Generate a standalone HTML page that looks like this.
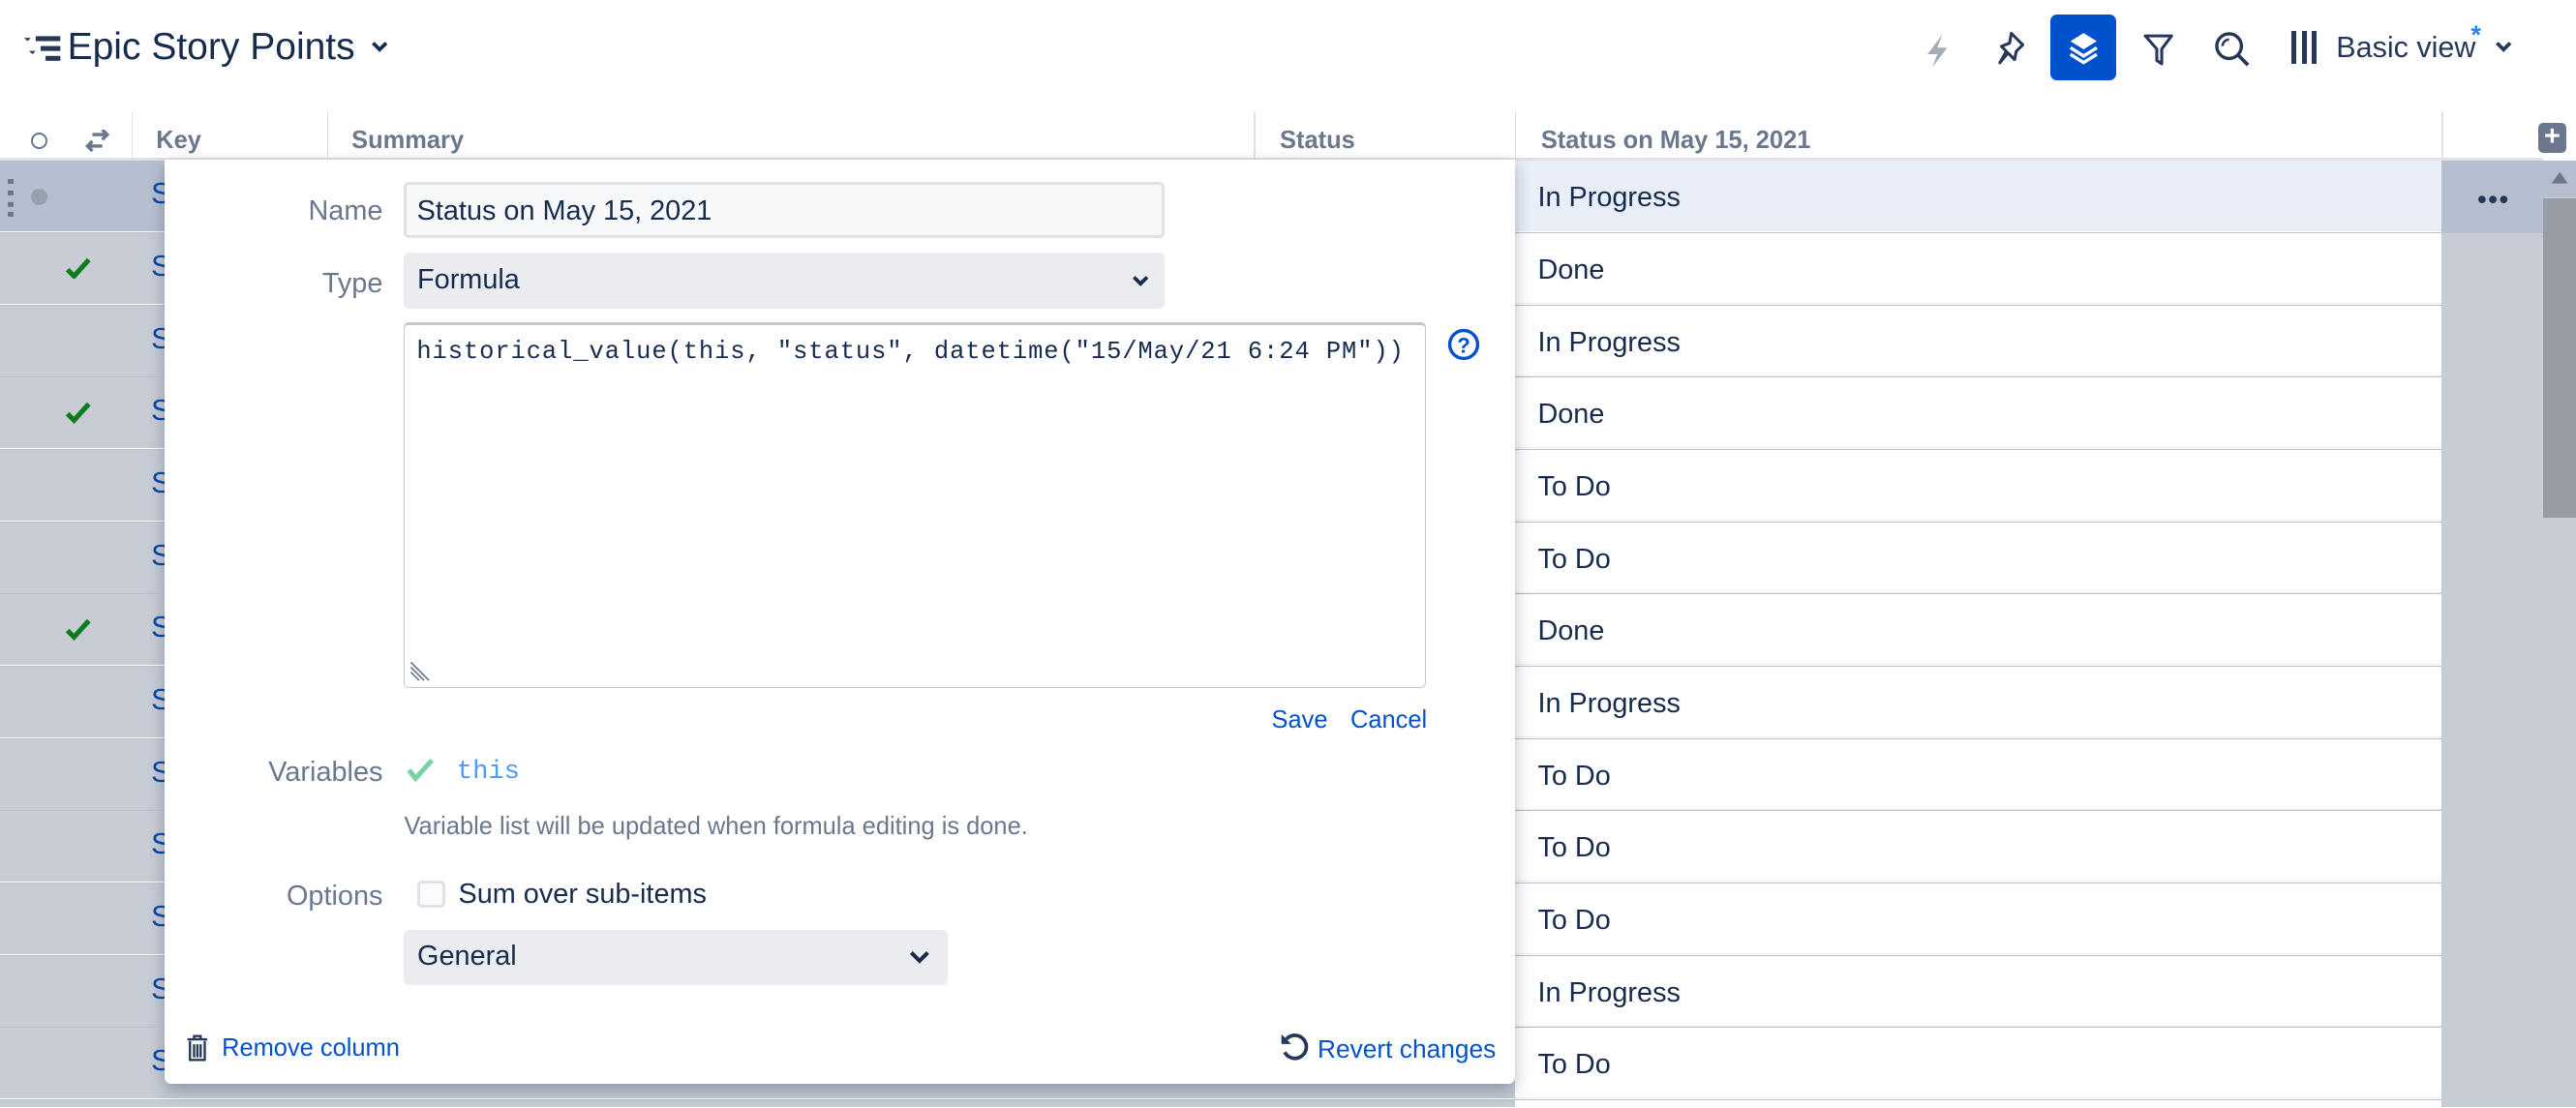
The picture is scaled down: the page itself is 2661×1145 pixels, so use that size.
<!DOCTYPE html>
<html><head><meta charset="utf-8"><style>
*{box-sizing:border-box;margin:0;padding:0}
html,body{width:2661px;height:1145px;overflow:hidden;background:#fff}
#w{zoom:1.69707;width:1568px;height:674px;position:relative;font-family:"Liberation Sans",sans-serif;color:#172b4d;overflow:hidden}
.a{position:absolute}
.hd{font-weight:bold;color:#6b778c;font-size:15px;top:77px}
.sep{position:absolute;top:68px;width:1px;height:29px;background:#dfe1e6}
.row{position:absolute;left:0;width:1548px;height:44px;border-bottom:1px solid #bcc1ca}
.lft{position:absolute;left:0;top:0;width:922px;height:43px;background:#c7ccd5}
.mid{position:absolute;left:922px;top:0;width:564px;height:43px;background:#fff;border-bottom:1px solid #ebecf0;font-size:17px;padding:13px 0 0 14px}
.rgt{position:absolute;left:1486px;top:0;width:62px;height:44px;background:#c7ccd5}
.s{position:absolute;left:92px;top:10px;color:#0747a6;font-size:18px}
.ck{position:absolute;left:40px;top:14px}
.lbl{position:absolute;right:689px;font-size:17px;color:#6b778c;text-align:right;white-space:nowrap}
.pl{position:absolute;font-size:17px}
a{color:#0052cc;text-decoration:none}
</style></head><body><div id="w">
<!-- header -->
<svg class="a" style="left:15px;top:20px" width="22" height="20" viewBox="0 0 22 20"><path d="M0 3l4 0-2 2z M3 11l4 0-2 2z" fill="#253858"/><rect x="7" y="2" width="15" height="3" fill="#253858"/><rect x="10" y="8" width="12" height="3" fill="#253858"/><rect x="13" y="14" width="9" height="3" fill="#253858"/></svg>
<div class="a" style="left:41px;top:16px;font-size:23px;color:#172b4d">Epic Story Points</div>
<svg class="a" style="left:225px;top:24px" width="12" height="10"><path d="M2 2l4 4 4-4" stroke="#172b4d" stroke-width="2.2" fill="none"/></svg>
<svg class="a" style="left:1170px;top:20px" width="18" height="22" viewBox="0 0 18 22"><path d="M12 1L3 13h6l-3 8 9-12H9z" fill="#a5adba"/></svg>
<svg class="a" style="left:1213px;top:18px" width="22" height="24" viewBox="0 0 22 24"><path d="M11 2l7 7-4 4-1 5-4-4-5 6 4-7-3-3 5-2z" stroke="#253858" stroke-width="1.8" fill="none" stroke-linejoin="round"/></svg>
<div class="a" style="left:1248px;top:9px;width:40px;height:40px;background:#0052cc;border-radius:4px"></div>
<svg class="a" style="left:1256px;top:17px" width="24" height="24" viewBox="0 0 24 24"><path d="M12 3l8 5-8 5-8-5z" fill="#fff"/><path d="M4 12l8 5 8-5M4 16l8 5 8-5" stroke="#fff" stroke-width="2" fill="none"/></svg>
<svg class="a" style="left:1303px;top:19px" width="22" height="22" viewBox="0 0 22 22"><path d="M3 3h16l-6 8v9l-3-2v-7z" stroke="#253858" stroke-width="1.8" fill="none" stroke-linejoin="round"/></svg>
<svg class="a" style="left:1346px;top:17px" width="26" height="26" viewBox="0 0 26 26"><circle cx="11" cy="11" r="7.5" stroke="#253858" stroke-width="2" fill="none"/><path d="M16.5 16.5l6 6" stroke="#253858" stroke-width="2.2"/><path d="M7 11a4 4 0 0 1 4-4" stroke="#253858" stroke-width="1.5" fill="none"/></svg>
<div class="a" style="left:1395px;top:19px;width:3px;height:20px;background:#253858"></div>
<div class="a" style="left:1401px;top:19px;width:3px;height:20px;background:#253858"></div>
<div class="a" style="left:1407px;top:19px;width:3px;height:20px;background:#253858"></div>
<div class="a" style="left:1422px;top:19px;font-size:18px;color:#253858">Basic view</div>
<div class="a" style="left:1504px;top:12px;font-size:16px;color:#2684ff;font-weight:bold">*</div>
<svg class="a" style="left:1518px;top:24px" width="12" height="10"><path d="M2 2l4 4 4-4" stroke="#253858" stroke-width="2.2" fill="none"/></svg>
<!-- table header -->
<div class="a" style="left:19px;top:81px;width:10px;height:10px;border:1.5px solid #6b778c;border-radius:50%"></div>
<svg class="a" style="left:51px;top:79px" width="16" height="14" viewBox="0 0 16 14"><path d="M5 3h9M11 0l3 3-3 3M11 10H2M5 7l-3 3 3 3" stroke="#6b778c" stroke-width="2" fill="none"/></svg>
<div class="sep" style="left:80px"></div><div class="sep" style="left:199px"></div><div class="sep" style="left:763px"></div><div class="sep" style="left:922px"></div><div class="sep" style="left:1486px"></div>
<div class="a hd" style="left:95px">Key</div>
<div class="a hd" style="left:214px">Summary</div>
<div class="a hd" style="left:779px">Status</div>
<div class="a hd" style="left:938px">Status on May 15, 2021</div>
<div class="a" style="left:1545px;top:75px;width:17px;height:18px;background:#6b778c;border-radius:3px;color:#fff;font-weight:bold;font-size:17px;line-height:17px;text-align:center">+</div>
<div class="a" style="left:0;top:96px;width:1548px;height:2px;background:#dfe1e6"></div>
<!-- rows -->
<div class="row" style="top:98px"><div class="lft" style="background:#b5bfcf"></div><div class="mid" style="background:#e9eef8">In Progress</div><div class="rgt" style="background:#b5bfcf"></div>
<div class="a" style="left:5px;top:11px;width:3px;height:3px;background:#6b778c;box-shadow:0 7px #6b778c,0 14px #6b778c,0 20px #6b778c"></div>
<div class="a" style="left:19px;top:17px;width:10px;height:10px;border-radius:50%;background:#97a0af"></div><div class="s">S</div>
<div class="a" style="left:1508px;top:14px;font-weight:bold;color:#253858;font-size:16px;letter-spacing:1px">•••</div></div>
<div class="row" style="top:142px"><div class="lft"></div><div class="mid">Done</div><div class="rgt"></div><svg class="ck" width="16" height="14"><path d="M1 8l4 4 9-10" stroke="#0a7d1a" stroke-width="3" fill="none"/></svg><div class="s">S</div></div>
<div class="row" style="top:186px"><div class="lft"></div><div class="mid">In Progress</div><div class="rgt"></div><div class="s">S</div></div>
<div class="row" style="top:230px"><div class="lft"></div><div class="mid">Done</div><div class="rgt"></div><svg class="ck" width="16" height="14"><path d="M1 8l4 4 9-10" stroke="#0a7d1a" stroke-width="3" fill="none"/></svg><div class="s">S</div></div>
<div class="row" style="top:274px"><div class="lft"></div><div class="mid">To Do</div><div class="rgt"></div><div class="s">S</div></div>
<div class="row" style="top:318px"><div class="lft"></div><div class="mid">To Do</div><div class="rgt"></div><div class="s">S</div></div>
<div class="row" style="top:362px"><div class="lft"></div><div class="mid">Done</div><div class="rgt"></div><svg class="ck" width="16" height="14"><path d="M1 8l4 4 9-10" stroke="#0a7d1a" stroke-width="3" fill="none"/></svg><div class="s">S</div></div>
<div class="row" style="top:406px"><div class="lft"></div><div class="mid">In Progress</div><div class="rgt"></div><div class="s">S</div></div>
<div class="row" style="top:450px"><div class="lft"></div><div class="mid">To Do</div><div class="rgt"></div><div class="s">S</div></div>
<div class="row" style="top:494px"><div class="lft"></div><div class="mid">To Do</div><div class="rgt"></div><div class="s">S</div></div>
<div class="row" style="top:538px"><div class="lft"></div><div class="mid">To Do</div><div class="rgt"></div><div class="s">S</div></div>
<div class="row" style="top:582px"><div class="lft"></div><div class="mid">In Progress</div><div class="rgt"></div><div class="s">S</div></div>
<div class="row" style="top:626px"><div class="lft"></div><div class="mid">To Do</div><div class="rgt"></div><div class="s">S</div></div>
<div class="a" style="left:0;top:670px;width:922px;height:4px;background:#c7ccd5"></div>
<div class="a" style="left:1486px;top:670px;width:62px;height:4px;background:#c7ccd5"></div>
<!-- scrollbar -->
<div class="a" style="left:1548px;top:98px;width:20px;height:576px;background:#c7ccd5"></div>
<div class="a" style="left:1548px;top:98px;width:20px;height:22px;background:#b5bfcf"></div>
<svg class="a" style="left:1552px;top:104px" width="12" height="9"><path d="M6 1l5 7H1z" fill="#6b778c"/></svg>
<div class="a" style="left:1548px;top:121px;width:20px;height:194px;background:#989ca5"></div>
<!-- popup -->
<div class="a" style="left:100px;top:97px;width:822px;height:563px;background:#fff;border-radius:0 0 4px 4px;box-shadow:0 4px 10px rgba(9,30,66,.3)">
<div class="lbl" style="top:22px">Name</div>
<div class="a" style="left:146px;top:14px;width:463px;height:34px;background:#f7f8fa;border:2px solid #dfe1e6;border-radius:3px;font-size:17px;padding:6px 0 0 6px">Status on May 15, 2021</div>
<div class="lbl" style="top:66px">Type</div>
<div class="a" style="left:146px;top:57px;width:463px;height:34px;background:#ebecf0;border-radius:3px;font-size:17px;padding:7px 0 0 8px">Formula</div>
<svg class="a" style="left:588px;top:70px" width="12" height="9"><path d="M2 2l4 4 4-4" stroke="#172b4d" stroke-width="2.2" fill="none"/></svg>
<div class="a" style="left:146px;top:99px;width:622px;height:223px;border:1px solid #c1c7d0;border-top:2px solid #c1c7d0;border-radius:3px;font-family:'Liberation Mono',monospace;font-size:15px;letter-spacing:.55px;padding:8px 0 0 7px;white-space:nowrap">historical_value(this, "status", datetime("15/May/21 6:24 PM"))</div>
<svg class="a" style="left:148px;top:304px" width="14" height="14"><path d="M2 5l8 8M2 8l5 5M2 2l11 11" stroke="#6b778c" stroke-width="1"/></svg>
<svg class="a" style="left:781px;top:103px" width="20" height="20"><circle cx="10" cy="10" r="8.5" stroke="#0052cc" stroke-width="2" fill="none"/><text x="10" y="15" text-anchor="middle" font-size="13" font-weight="bold" fill="#0052cc" font-family="Liberation Sans">?</text></svg>
<a class="a" style="left:674px;top:333px;font-size:15px">Save</a>
<a class="a" style="left:722px;top:333px;font-size:15px">Cancel</a>
<div class="lbl" style="top:364px">Variables</div>
<svg class="a" style="left:147px;top:365px" width="18" height="14"><path d="M2 7l4 5 10-11" stroke="#79d2a6" stroke-width="3" fill="none"/></svg>
<div class="a" style="left:178px;top:364px;font-family:'Liberation Mono',monospace;font-size:16px;color:#4c9aff">this</div>
<div class="a" style="left:146px;top:398px;font-size:15px;color:#6b778c">Variable list will be updated when formula editing is done.</div>
<div class="lbl" style="top:439px">Options</div>
<div class="a" style="left:154px;top:439px;width:17px;height:17px;border:2px solid #dfe1e6;border-radius:3px;background:#fafbfc"></div>
<div class="pl" style="left:179px;top:438px">Sum over sub-items</div>
<div class="a" style="left:146px;top:469px;width:331px;height:34px;background:#ebecf0;border-radius:3px;font-size:17px;padding:7px 0 0 8px">General</div>
<svg class="a" style="left:453px;top:481px" width="14" height="10"><path d="M2 2l5 5 5-5" stroke="#172b4d" stroke-width="2.4" fill="none"/></svg>
<svg class="a" style="left:13px;top:533px" width="14" height="17" viewBox="0 0 14 17"><path d="M1 3h12M5 3V1h4v2M2.5 4v11.5h9V4M5 6v8M7 6v8M9 6v8" stroke="#253858" stroke-width="1.4" fill="none"/></svg>
<a class="a" style="left:35px;top:533px;font-size:15px">Remove column</a>
<svg class="a" style="left:679px;top:532px" width="18" height="18" viewBox="0 0 18 18"><path d="M4 4a7 7 0 1 1-1 8" stroke="#253858" stroke-width="2.2" fill="none"/><path d="M1 1v6h6z" fill="#253858"/></svg>
<a class="a" style="left:702px;top:533px;font-size:15.5px">Revert changes</a>
</div>
</div></body></html>
